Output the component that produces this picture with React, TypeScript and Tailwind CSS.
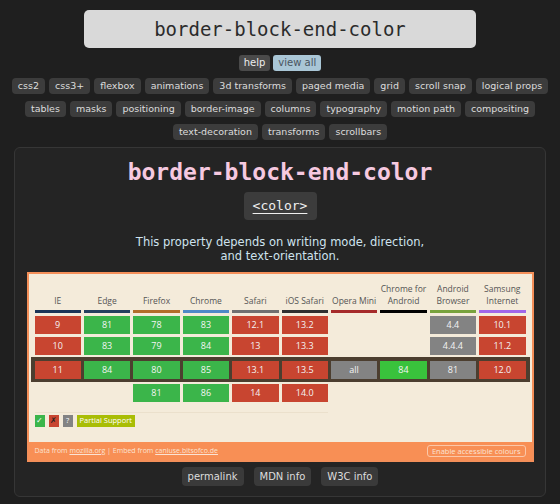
import React from "react";

const tags1 = ["css2","css3+","flexbox","animations","3d transforms","paged media","grid","scroll snap","logical props","tables","masks","positioning","border-image","columns","typography","motion path","compositing","text-decoration","transforms","scrollbars"];

type Cell = { v: string; c: "r" | "g" | "x" | "a" | "" };
const R = (v: string): Cell => ({ v, c: "r" });
const G = (v: string): Cell => ({ v, c: "g" });
const X = (v: string): Cell => ({ v, c: "x" });
const A = (v: string): Cell => ({ v, c: "a" });
const E: Cell = { v: "", c: "" };

const browsers: { l: string[]; bar: string }[] = [
  { l: ["IE"], bar: "#1c3557" },
  { l: ["Edge"], bar: "#24405e" },
  { l: ["Firefox"], bar: "#b26d2a" },
  { l: ["Chrome"], bar: "#4f89c7" },
  { l: ["Safari"], bar: "#707070" },
  { l: ["iOS Safari"], bar: "#2f2f2f" },
  { l: ["Opera Mini"], bar: "#a52a2a" },
  { l: ["Chrome for", "Android"], bar: "#000000" },
  { l: ["Android", "Browser"], bar: "#78a23c" },
  { l: ["Samsung", "Internet"], bar: "#a067e8" },
];

const rows: Cell[][] = [
  [R("9"), G("81"), G("78"), G("83"), R("12.1"), R("13.2"), E, E, X("4.4"), R("10.1")],
  [R("10"), G("83"), G("79"), G("84"), R("13"), R("13.3"), E, E, X("4.4.4"), R("11.2")],
  [R("11"), G("84"), G("80"), G("85"), R("13.1"), R("13.5"), X("all"), A("84"), X("81"), R("12.0")],
  [E, E, G("81"), G("86"), R("14"), R("14.0"), E, E, E, E],
];

function CellBox({ c }: { c: Cell }) {
  if (!c.c) return <div className="h-[18px]" />;
  const bg =
    c.c === "r" ? "bg-[#c84530]" : c.c === "g" ? "bg-[#3bb54a]" : c.c === "a" ? "bg-[#39c23c]" : "bg-[#838383]";
  return (
    <div className={`h-[18px] ${bg} flex items-center justify-center text-[9px] text-[#f4f4f4]`}>{c.v}</div>
  );
}

export default function App() {
  const sans = { fontFamily: '"DejaVu Sans", Verdana, sans-serif' };
  const mono = { fontFamily: '"DejaVu Sans Mono", monospace' };
  const open = { fontFamily: '"Open Sans", sans-serif' };
  return (
    <div className="w-[560px] h-[504px] bg-[#1f1f1f] flex flex-col items-center overflow-hidden" style={sans}>
      <div className="mt-[10px] w-[392px] h-[38px] bg-[#d9d9d9] rounded-[5px] flex items-center justify-center text-[19px] text-[#2b2b2b]" style={mono}>
        border-block-end-color
      </div>
      <div className="mt-[7px] flex gap-[3px]">
        <span className="h-[16px] px-[5px] rounded-[3px] bg-[#4a4a4a] text-[#eeeeee] text-[10px] leading-[16px]">help</span>
        <span className="h-[16px] px-[5px] rounded-[3px] bg-[#a9c6d6] text-[#4a5560] text-[10px] leading-[16px]">view all</span>
      </div>
      <div className="mt-[7px] w-[544px] flex flex-wrap justify-center gap-x-[4px] gap-y-[7px]">
        {tags1.map((t) => (
          <span key={t} className="h-[16px] px-[6px] rounded-[4px] bg-[#3c3c3c] text-[#dddddd] text-[9.5px] leading-[16px] whitespace-nowrap">{t}</span>
        ))}
      </div>
      <div className="mt-[7px] w-[532px] h-[350px] border border-[#363636] rounded-[6px] bg-[#242424] flex flex-col items-center">
        <div className="mt-[10px] text-[23px] font-bold text-[#f6c9e0] leading-[28px]" style={mono}>border-block-end-color</div>
        <div className="mt-[6px] w-[73px] h-[28px] bg-[#3c3c3c] rounded-[4px] flex items-center justify-center text-[13px] text-[#f0f0f0] underline underline-offset-[3px]" style={mono}>&lt;color&gt;</div>
        <div className="mt-[15px] text-center text-[11.5px] leading-[14px] text-[#cfe3ee]">
          This property depends on writing mode, direction,<br />and text-orientation.
        </div>
        <div className="mt-[9px] w-[507px] h-[190px] border-[2px] border-[#f48f59] bg-[#f4ebda] flex flex-col" style={open}>
          <div className="flex-1 px-[6px] pt-[9px]">
            <div className="h-[24px] grid grid-cols-10 gap-x-[3px] items-end">
              {browsers.map((b) => (
                <div key={b.l.join()} className="flex flex-col items-center">
                  <div className="text-[8.5px] leading-[12px] text-[#555] text-center whitespace-nowrap">
                    {b.l.map((x) => (<div key={x}>{x}</div>))}
                  </div>
                </div>
              ))}
            </div>
            <div className="mt-[3px] grid grid-cols-10 gap-x-[3px]">
              {browsers.map((b) => (
                <div key={b.l.join()} className="h-[3px]" style={{ background: b.bar }} />
              ))}
            </div>
            <div className="mt-[3px] flex flex-col">
              {rows.map((r, i) => (
                <div
                  key={i}
                  className={
                    i === 2
                      ? "mt-[2px] -mx-[4px] border-[3px] border-[#4c3e2f] bg-[#4c3e2f] px-[1px] pt-[1px] grid grid-cols-10 gap-x-[3px]"
                      : i === 0
                      ? "grid grid-cols-10 gap-x-[3px]"
                      : i === 1
                      ? "mt-[3px] grid grid-cols-10 gap-x-[3px]"
                      : "mt-[2px] grid grid-cols-10 gap-x-[3px]"
                  }
                >
                  {r.map((c, j) => (<CellBox key={j} c={c} />))}
                </div>
              ))}
            </div>
            <div className="mt-[10px] w-[293px] h-px bg-[#ebe0cc]" />
            <div className="mt-[2px] flex items-center gap-[4px] text-[7.5px] text-white">
              <span className="w-[10px] h-[12px] bg-[#3bb54a] flex items-center justify-center">✓</span>
              <span className="w-[10px] h-[12px] bg-[#c84530] flex items-center justify-center text-[#222]">✗</span>
              <span className="w-[10px] h-[12px] bg-[#838383] flex items-center justify-center">?</span>
              <span className="h-[12px] px-[3px] bg-[#a9bd05] flex items-center">Partial Support</span>
            </div>
          </div>
          <div className="h-[18px] bg-[#f88f55] flex items-center justify-between px-[6px] text-[7px] text-[#fbe3d3]">
            <span>Data from <span className="underline">mozilla.org</span> | Embed from <span className="underline">caniuse.bitsofco.de</span></span>
            <span className="border border-[#fbc7a8] rounded-[3px] px-[4px] h-[12px] leading-[11px] text-[7.5px]">Enable accessible colours</span>
          </div>
        </div>
        <div className="mt-[5px] flex gap-[10px]">
          {["permalink", "MDN info", "W3C info"].map((b) => (
            <span key={b} className="h-[19px] px-[6px] rounded-[4px] bg-[#3a3a3a] text-[#dddddd] text-[10px] leading-[19px]">{b}</span>
          ))}
        </div>
      </div>
    </div>
  );
}
